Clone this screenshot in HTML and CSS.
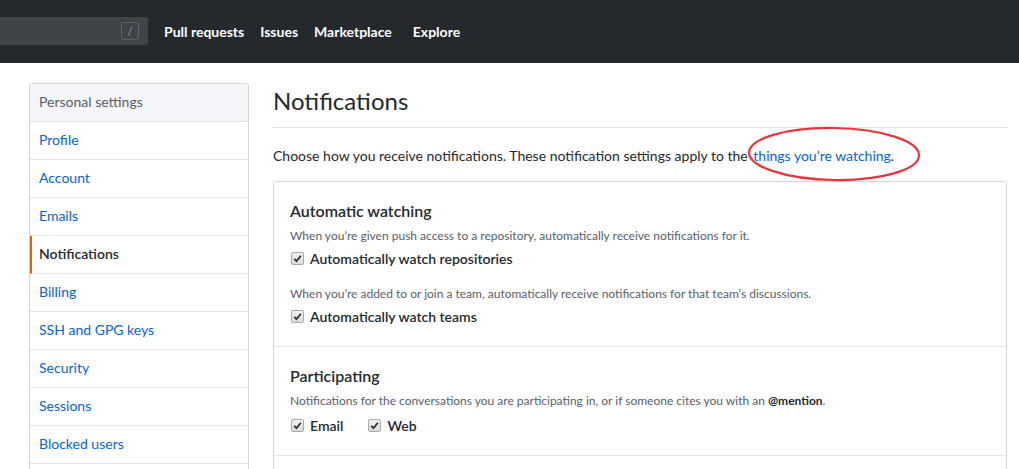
FILE: index.html
```html
<!DOCTYPE html>
<html>
<head>
<meta charset="utf-8">
<link rel="stylesheet" href="styles.css">
</head>
<body>
<header class="topbar">
  <div class="search"><span class="slash">/</span></div>
  <nav class="topnav">
    <a class="navlink">Pull requests</a>
    <a class="navlink">Issues</a>
    <a class="navlink">Marketplace</a>
    <a class="navlink explore">Explore</a>
  </nav>
</header>
<div class="page">
  <aside class="menu">
    <div class="menu-head">Personal settings</div>
    <a class="menu-item">Profile</a>
    <a class="menu-item">Account</a>
    <a class="menu-item">Emails</a>
    <a class="menu-item selected">Notifications</a>
    <a class="menu-item">Billing</a>
    <a class="menu-item">SSH and GPG keys</a>
    <a class="menu-item">Security</a>
    <a class="menu-item">Sessions</a>
    <a class="menu-item">Blocked users</a>
    <a class="menu-item"></a>
  </aside>
  <main class="main">
    <h2 class="title">Notifications</h2>
    <p class="lead">Choose how you receive notifications. These notification settings apply to the <a class="link">things you’re watching</a>.</p>
    <div class="box">
      <section class="box-row">
        <h3 class="sec-title">Automatic watching</h3>
        <p class="note">When you’re given push access to a repository, automatically receive notifications for it.</p>
        <div class="checks"><label class="check"><span class="cb"><svg viewBox="0 0 13 13" width="13" height="13"><path d="M3.2 6.8 L5.5 9.1 L9.9 3.7" fill="none" stroke="#333" stroke-width="1.8"/></svg></span>Automatically watch repositories</label></div>
        <p class="note second">When you’re added to or join a team, automatically receive notifications for that team’s discussions.</p>
        <div class="checks"><label class="check"><span class="cb"><svg viewBox="0 0 13 13" width="13" height="13"><path d="M3.2 6.8 L5.5 9.1 L9.9 3.7" fill="none" stroke="#333" stroke-width="1.8"/></svg></span>Automatically watch teams</label></div>
      </section>
      <section class="box-row">
        <h3 class="sec-title">Participating</h3>
        <p class="note">Notifications for the conversations you are participating in, or if someone cites you with an <strong class="mention">@mention</strong>.</p>
        <div class="checks pair"><label class="check"><span class="cb"><svg viewBox="0 0 13 13" width="13" height="13"><path d="M3.2 6.8 L5.5 9.1 L9.9 3.7" fill="none" stroke="#333" stroke-width="1.8"/></svg></span>Email</label><label class="check"><span class="cb"><svg viewBox="0 0 13 13" width="13" height="13"><path d="M3.2 6.8 L5.5 9.1 L9.9 3.7" fill="none" stroke="#333" stroke-width="1.8"/></svg></span>Web</label></div>
      </section>
      <section class="box-row empty"></section>
    </div>
  </main>
</div>
<svg class="circle" width="180" height="60" viewBox="0 0 180 60"><ellipse cx="89" cy="29" rx="85" ry="26" fill="none" stroke="#e8353b" stroke-width="2.2" transform="rotate(1 89 29)"/></svg>
</body>
</html>
```
FILE: styles.css
```css
html, body { margin: 0; padding: 0; }
body {
  font-family: Lato, "Liberation Sans", sans-serif;
  font-size: 14px;
  color: #24292e;
  background: #fff;
  overflow: hidden;
  height: 469px;
  position: relative;
}
.topbar {
  height: 63px;
  background: #24292e;
  display: flex;
  align-items: center;
}
.search {
  width: 148px;
  height: 28px;
  margin-top: -1px;
  box-sizing: border-box;
  background: #3f4448;
  border-radius: 0 3px 3px 0;
  display: flex;
  align-items: center;
  justify-content: flex-end;
  padding-right: 9px;
}
.slash {
  width: 18px;
  height: 18px;
  box-sizing: border-box;
  border: 1px solid #5d6267;
  border-radius: 3px;
  color: #959da5;
  font-size: 11px;
  display: flex;
  align-items: center;
  justify-content: center;
}
.topnav { display: flex; margin-left: 16px; }
.navlink {
  color: #fff;
  font-weight: 700;
  font-size: 14px;
  margin-right: 16px;
}
.explore { margin-left: 5px; }
.page {
  display: flex;
  padding: 20px 0 0 29px;
  gap: 24px;
}
.menu {
  width: 220px;
  box-sizing: border-box;
  flex: none;
  border: 1px solid #d1d5da;
  border-radius: 3px;
  display: flex;
  flex-direction: column;
}
.menu-head {
  height: 35px;
  line-height: 35px;
  padding: 0 0 2px 9px;
  background: #f3f5f8;
  color: #586069;
  font-size: 14px;
  border-bottom: 1px solid #e1e4e8;
}
.menu-item {
  height: 35px;
  flex: none;
  line-height: 35px;
  padding: 0 0 2px 9px;
  color: #0366d6;
  border-bottom: 1px solid #e1e4e8;
}
.menu-item.selected {
  color: #24292e;
  font-weight: 600;
  border-left: 2px solid #e36209;
  padding-left: 7px;
}
.main { width: 734px; flex: none; }
.title {
  margin: 0;
  font-size: 24px;
  font-weight: 400;
  line-height: 35px;
  padding: 0 0 9px;
  border-bottom: 1px solid #e1e4e8;
}
.lead { margin: 17px 0 15px; line-height: 21px; }
.link { color: #0366d6; padding-left: 2px; }
.box {
  border: 1px solid #d1d5da;
  border-radius: 3px;
}
.box-row {
  padding: 17px 16px 19px;
  border-bottom: 1px solid #e1e4e8;
}
.box-row.empty { height: 40px; }
.sec-title {
  margin: 0 0 4px;
  font-size: 16px;
  font-weight: 600;
  line-height: 24px;
}
.note {
  margin: 0;
  font-size: 12px;
  line-height: 18px;
  color: #586069;
}
.note.second { margin-top: 16px; }
.mention { color: #24292e; font-weight: 700; }
.checks { display: flex; gap: 24px; margin-top: 3px; }
.checks.pair { margin-top: 5px; }
.check {
  display: flex;
  align-items: center;
  gap: 6px;
  font-weight: 600;
  line-height: 21px;
  padding-left: 1px;
}
.cb {
  width: 13px;
  height: 13px;
  box-sizing: border-box;
  border: 1px solid #a9a9a9;
  border-radius: 2px;
  background: linear-gradient(#f0f0f0, #dcdcdc);
  display: flex;
}
.cb svg { margin: -1px; }
.circle {
  position: absolute;
  left: 745px;
  top: 125px;
}
```
